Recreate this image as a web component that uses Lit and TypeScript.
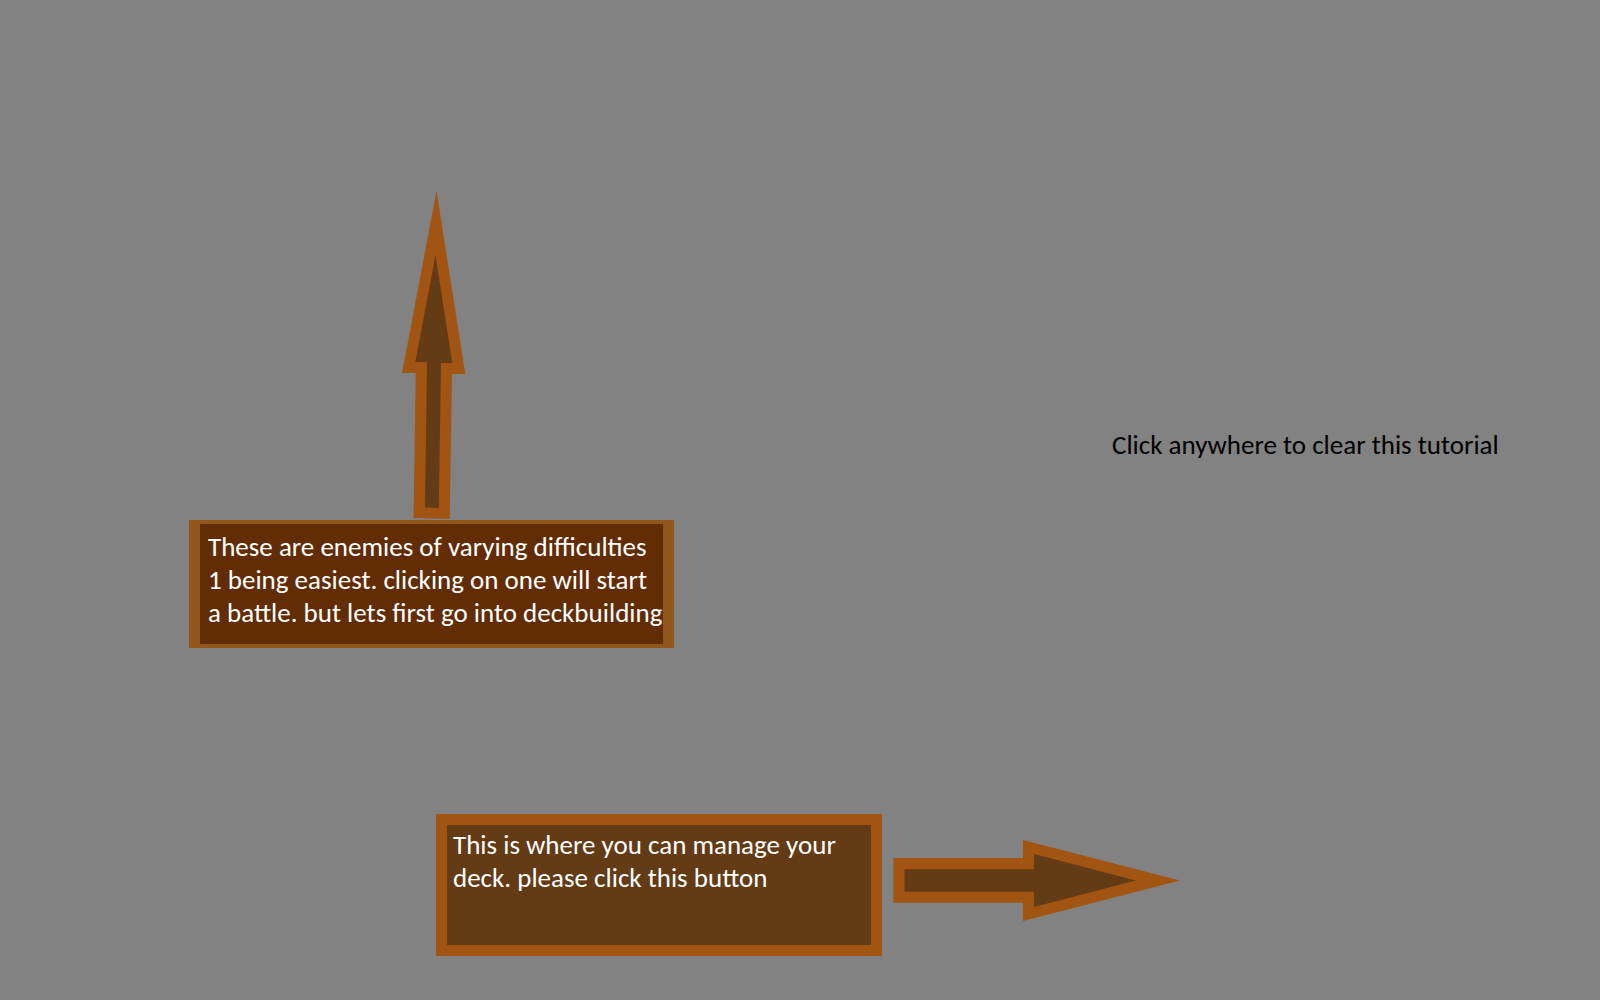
import { LitElement, html, css, nothing } from "lit";
import { customElement, state } from "lit/decorators.js";

@customElement("app-root")
export class AppRoot extends LitElement {
  static styles = css`
    :host {
      display: block;
      font-family: Carlito, Calibri, Lato, "Open Sans", sans-serif;
      font-size: 27px;
      line-height: 33px;
      color: #fff;
    }
    .overlay {
      box-sizing: border-box;
      min-height: 100vh;
      padding: 190px 0 44px;
      background: #828282;
      display: flex;
      flex-direction: column;
      justify-content: space-between;
      gap: 48px;
    }
    .row {
      display: grid;
    }
    .enemies {
      grid-template-columns: 189fr 485fr 438fr 488fr;
    }
    .deck {
      grid-template-columns: 436fr 446fr 718fr;
      align-items: center;
    }
    .step {
      grid-column: 2;
      display: flex;
      flex-direction: column;
      align-items: center;
    }
    .arrow {
      display: block;
      flex: none;
    }
    .arrow-right {
      margin: 0 0 8px 11px;
    }
    .edge {
      fill: #a25513;
    }
    .core {
      fill: #633b15;
    }
    .note {
      box-sizing: border-box;
      width: 100%;
      margin: 0;
    }
    .note-enemies {
      min-height: 128px;
      padding: 6px 0 6px 8px;
      border: solid #90561c;
      border-width: 4px 11px;
      background: #622d05;
      white-space: nowrap;
    }
    .note-deck {
      grid-column: 2;
      min-height: 142px;
      padding: 3px 6px;
      border: 11px solid #a25513;
      background: #633b15;
    }
    .line {
      display: block;
    }
    .hint {
      grid-column: 4;
      margin: 238px 0 0;
      color: #000;
    }
  `;

  @state() private cleared = false;

  private clear() {
    this.cleared = true;
  }

  private renderSteps() {
    return html`
      <section class="row enemies">
        <div class="step">
          <svg class="arrow" width="64" height="330" viewBox="400 190 64 330" overflow="visible" aria-hidden="true">
            <polygon class="edge" points="436.5,191 465.3,374 452,374 449.7,519 413.5,518 415.7,373 402,373" />
            <polygon class="core" points="435.5,255 452.3,363 441,363 438.8,508 425,507.5 427,362 415.3,362" />
          </svg>
          <p class="note note-enemies">
            <span class="line">These are enemies of varying difficulties</span>
            <span class="line">1 being easiest. clicking on one will start</span>
            <span class="line">a battle. but lets first go into deckbuilding</span>
          </p>
        </div>
        <p class="hint">Click anywhere to clear this tutorial</p>
      </section>
      <section class="row deck">
        <p class="note note-deck">
          <span class="line">This is where you can manage your</span>
          <span class="line">deck. please click this button</span>
        </p>
        <svg class="arrow arrow-right" width="287" height="82" viewBox="893 836 287 82" overflow="visible" aria-hidden="true">
          <polygon class="edge" points="893.3,854 1023,854 1023,836 1180,876.5 1023,917 1023,898.7 893.3,898.7" />
          <polygon class="core" points="904.5,865.3 1034,865.3 1034,850 1136,876.5 1034,903 1034,887.7 904.5,887.7" />
        </svg>
      </section>
    `;
  }

  render() {
    return html`<main class="overlay" @click=${this.clear}>
      ${this.cleared ? nothing : this.renderSteps()}
    </main>`;
  }
}
